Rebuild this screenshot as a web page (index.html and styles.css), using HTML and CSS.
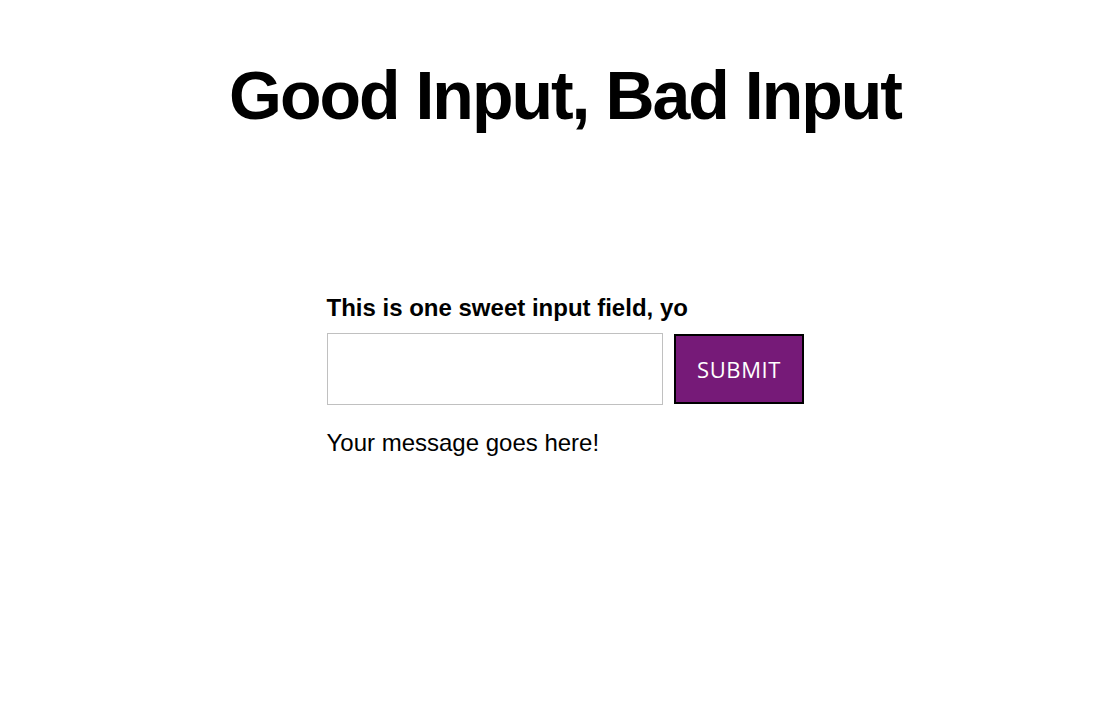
FILE: index.html
```html
<!DOCTYPE html>
<html lang="en">
<head>
<meta charset="utf-8">
<title>Good Input, Bad Input</title>
<link rel="stylesheet" href="styles.css">
</head>
<body>
<main class="page">
  <h1 class="title">Good Input, Bad Input</h1>
  <form class="form" onsubmit="return false">
    <label class="label" for="field">This is one sweet input field, yo</label>
    <div class="row">
      <input class="field" id="field" type="text">
      <button class="submit" type="submit">SUBMIT</button>
    </div>
    <p class="message">Your message goes here!</p>
  </form>
</main>
</body>
</html>
```
FILE: styles.css
```css
html, body {
  margin: 0;
  padding: 0;
  background: #fff;
}
body {
  font-family: "Liberation Sans", Arial, sans-serif;
  color: #000;
}
.page {
  display: flex;
  flex-direction: column;
  align-items: center;
  padding-left: 10px;
}
.title {
  margin: 53px 0 0;
  font-size: 68px;
  line-height: 84px;
  font-weight: 700;
  letter-spacing: -2px;
}
.form {
  margin-top: 157px;
  display: flex;
  flex-direction: column;
  width: 477px;
}
.label {
  font-size: 24px;
  font-weight: 700;
  line-height: 28px;
  margin-bottom: 11px;
}
.row {
  display: flex;
  align-items: center;
  gap: 11px;
}
.field {
  box-sizing: border-box;
  width: 336px;
  height: 72px;
  border: 1px solid #c0c0c0;
  margin: 0;
  padding: 0 10px;
  font-size: 22px;
}
.submit {
  box-sizing: border-box;
  width: 130px;
  height: 70px;
  margin: 0;
  border: 2px solid #000;
  background: #761a78;
  color: #fff;
  font-family: "Open Sans", "Liberation Sans", sans-serif;
  font-size: 22px;
  letter-spacing: 0.6px;
  padding: 0 0 0 1px;
}
.message {
  margin: 24px 0 0;
  font-size: 24px;
  line-height: 28px;
}
```
